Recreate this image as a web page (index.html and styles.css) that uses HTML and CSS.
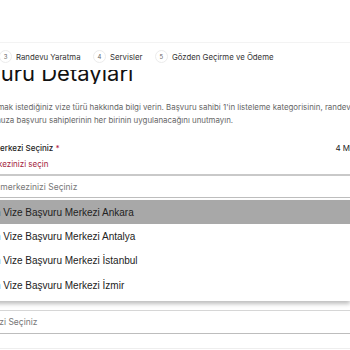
FILE: index.html
```html
<!DOCTYPE html>
<html lang="tr">
<head>
<meta charset="utf-8">
<link rel="stylesheet" href="styles.css">
</head>
<body>
<div class="top-space"></div>
<nav class="stepper">
  <div class="step"><span class="num">3</span><span class="label">Randevu Yaratma</span></div>
  <div class="step"><span class="num">4</span><span class="label">Servisler</span></div>
  <div class="step"><span class="num">5</span><span class="label">Gözden Geçirme ve Ödeme</span></div>
</nav>
<main class="page">
  <div class="title-clip"><h1 class="title">Başvuru Detayları</h1></div>
  <p class="desc">Lütfen başvurmak istediğiniz vize türü hakkında bilgi verin. Başvuru sahibi 1'in listeleme kategorisinin, randevu<br>türü ve grubunuza başvuru sahiplerinin her birinin uygulanacağını unutmayın.</p>
  <div class="field-head">
    <span class="field-label">Vize Kabul Merkezi Seçiniz <span class="req">*</span></span>
    <span class="count">4 Merkez</span>
  </div>
  <div class="error">Başvuru merkezinizi seçin</div>
  <div class="select">Başvuru merkezinizi Seçiniz</div>
  <ul class="listbox">
    <li class="opt active">Yunanistan Vize Başvuru Merkezi Ankara</li>
    <li class="opt">Yunanistan Vize Başvuru Merkezi Antalya</li>
    <li class="opt">Yunanistan Vize Başvuru Merkezi İstanbul</li>
    <li class="opt">Yunanistan Vize Başvuru Merkezi İzmir</li>
  </ul>
  <div class="select second">Alt merkezi Seçiniz</div>
  <div class="select third"></div>
</main>
</body>
</html>
```
FILE: styles.css
```css
html, body {
  margin: 0;
  padding: 0;
  background: #ffffff;
  overflow: hidden;
}
body {
  width: 350px;
  height: 350px;
  font-family: Inter, "Noto Sans", sans-serif;
  color: #222;
}
.top-space {
  height: 42px;
  border-bottom: 1px solid #f3f3f3;
}
.stepper {
  display: flex;
  align-items: center;
  gap: 12.5px;
  height: 27px;
  margin-left: -1px;
  font-size: 7.8px;
  color: #333;
  white-space: nowrap;
}
.step {
  display: flex;
  align-items: center;
  gap: 4px;
}
.num {
  display: inline-flex;
  align-items: center;
  justify-content: center;
  width: 11px;
  height: 11px;
  border: 1px solid #ececec;
  border-radius: 50%;
  font-size: 6px;
  color: #666;
}
.page {
  margin-left: -50px;
  white-space: nowrap;
}
.title-clip {
  height: 14px;
  overflow: hidden;
  display: flex;
  align-items: flex-end;
}
.title {
  margin: 0;
  font-size: 22px;
  font-weight: 400;
  line-height: 22px;
  color: #111;
  flex: none;
}
.desc {
  margin: 17px 0 0 -4px;
  font-size: 7.9px;
  line-height: 13px;
  color: #666;
}
.field-head {
  display: flex;
  justify-content: space-between;
  align-items: center;
  margin-top: 16px;
  width: 421px;
  font-size: 8px;
}
.field-label {
  font-weight: 500;
  color: #222;
}
.req { color: #b3263f; }
.count { color: #222; }
.error {
  margin-top: 6px;
  font-size: 8px;
  color: #a3233b;
}
.select {
  margin-top: 5px;
  height: 21px;
  border-top: 2px solid #c9c9c9;
  border-bottom: 1px solid #bdbdbd;
  display: flex;
  align-items: center;
  padding-left: 15px;
  font-size: 8.5px;
  color: #777;
  width: 400px;
}
.listbox {
  list-style: none;
  margin: 2px 0 0;
  padding: 0 0 4px;
  width: 400px;
  font-family: "Liberation Sans", Arial, sans-serif;
  font-size: 10px;
  color: #222;
  box-shadow: 0 3px 4px rgba(0,0,0,0.25);
}
.opt {
  height: 24.3px;
  display: flex;
  align-items: center;
  padding-left: 1px;
}
.opt.active { background: #a8a8a8; }
.select.second { margin-top: 9px; border-top: 1px solid #d6d6d6; height: 22px; padding-left: 11px; }
.select.third { margin-top: 14px; border-top: 1px solid #eee; border-bottom: none; height: 10px; }
```
